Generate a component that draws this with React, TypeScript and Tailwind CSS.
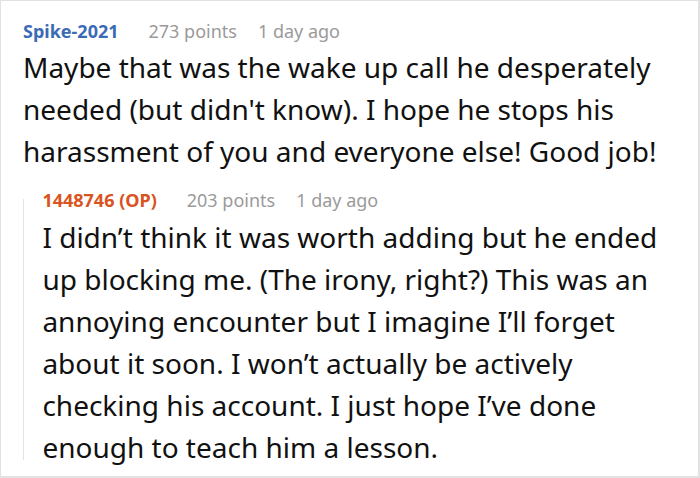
import React from "react";

const font = { fontFamily: '"Noto Sans", "DejaVu Sans", sans-serif' };

const CommentHeader = (props: {
  author: string;
  authorClass: string;
  points: string;
  time: string;
}) => {
  const { author, authorClass, points, time } = props;
  return (
    <div className="flex items-baseline h-[24px] leading-[24px] text-[18px]">
      <span className={`font-bold ${authorClass}`}>{author}</span>
      <span className="ml-[30px] text-[#9a9a9a]">{points}</span>
      <span className="ml-[21px] text-[#9a9a9a]">{time}</span>
    </div>
  );
};

export default function App() {
  return (
    <div
      className="w-[700px] h-[478px] bg-white border border-[#e2e2e2] border-r-2 border-b-2 overflow-hidden"
      style={font}
    >
      <div className="pl-[22px] pr-[20px] pt-[18px]">
        <CommentHeader
          author="Spike-2021"
          authorClass="text-[#3b6bb5]"
          points="273 points"
          time="1 day ago"
        />
        <p className="mt-[3px] text-[28px] leading-[42px] text-[#111]">
          Maybe that was the wake up call he desperately needed (but didn't
          know). I hope he stops his harassment of you and everyone else! Good
          job!
        </p>

        <div className="mt-[16px] flex">
          <div className="w-[2px] bg-[#e4e4e4] mt-[11px] mb-[8px]" />
          <div className="pl-[19px]">
            <CommentHeader
              author="1448746 (OP)"
              authorClass="text-[#d9541e]"
              points="203 points"
              time="1 day ago"
            />
            <p className="mt-[4px] text-[28px] leading-[42px] text-[#111]">
              I didn’t think it was worth adding but he ended up blocking me.
              (The irony, right?) This was an annoying encounter but I imagine
              I’ll forget about it soon. I won’t actually be actively checking
              his account. I just hope I’ve done enough to teach him a lesson.
            </p>
          </div>
        </div>
      </div>
    </div>
  );
}
